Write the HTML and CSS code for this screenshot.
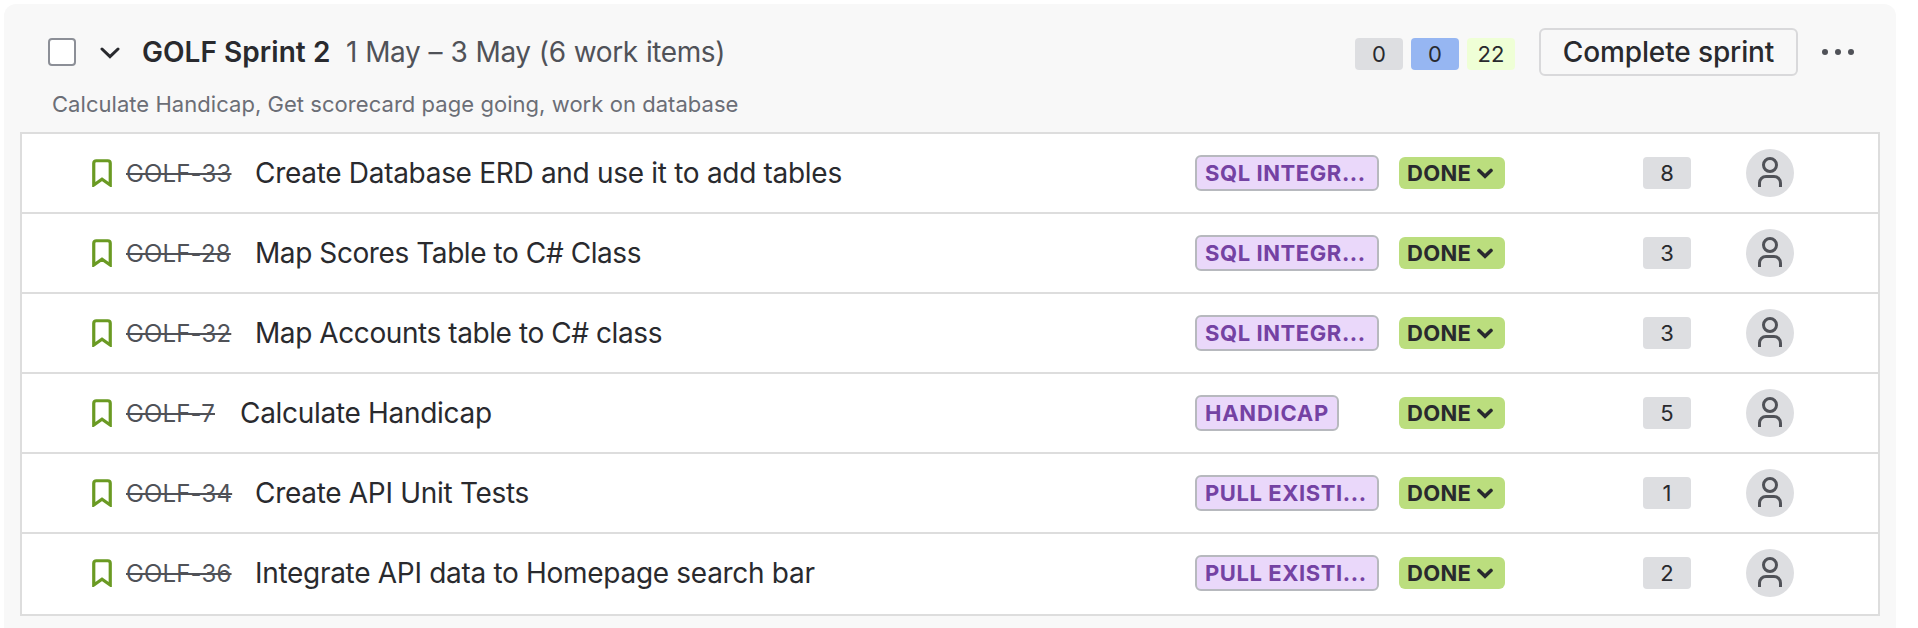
FILE: index.html
```html
<!DOCTYPE html>
<html lang="en">
<head>
<meta charset="utf-8">
<title>GOLF Sprint 2</title>
<link rel="stylesheet" href="styles.css">
</head>
<body>
<svg class="defs" width="0" height="0">
  <symbol id="story" viewBox="0 0 20 28"><path d="M1.75 26V4.25A2.5 2.5 0 0 1 4.25 1.75H15.75A2.5 2.5 0 0 1 18.25 4.25V26L10 20.2Z" fill="none" stroke="#6a9a23" stroke-width="3.2"/></symbol>
  <symbol id="chevron" viewBox="0 0 16 11"><path d="M2 2.5L8 8.3L14 2.5" fill="none" stroke="#292a2e" stroke-width="3.6" stroke-linecap="round"/></symbol>
  <symbol id="person" viewBox="0 0 48 48"><circle cx="24" cy="16" r="6.5" fill="none" stroke="#505258" stroke-width="3"/><path d="M13.5 38V34A6.5 6.5 0 0 1 20 27.5H28A6.5 6.5 0 0 1 34.5 34V38" fill="none" stroke="#505258" stroke-width="3"/></symbol>
</svg>
<main class="sprint">
  <header class="head">
    <span class="checkbox"></span>
    <svg class="toggle" viewBox="0 0 20 12"><path d="M2 2L10 9.7L18 2" fill="none" stroke="#292a2e" stroke-width="3" stroke-linecap="round"/></svg>
    <h1 class="name">GOLF Sprint 2</h1>
    <span class="dates">1 May – 3 May (6 work items)</span>
    <div class="totals"><span class="count">0</span><span class="count progress">0</span><span class="count complete">22</span></div>
    <button class="button">Complete sprint</button>
    <svg class="more" viewBox="0 0 32 8"><g fill="#505258"><circle cx="3" cy="4" r="3"/><circle cx="16" cy="4" r="3"/><circle cx="29" cy="4" r="3"/></g></svg>
  </header>
  <p class="goal">Calculate Handicap, Get scorecard page going, work on database</p>
  <section class="list">
    <article class="row"><svg class="type"><use href="#story"/></svg><span class="key">GOLF-33</span><span class="title">Create Database ERD and use it to add tables</span><div class="epic-cell"><span class="epic">SQL INTEGR...</span></div><span class="status">DONE<svg class="caret"><use href="#chevron"/></svg></span><span class="count points">8</span><svg class="avatar"><use href="#person"/></svg></article>
    <article class="row"><svg class="type"><use href="#story"/></svg><span class="key">GOLF-28</span><span class="title tight">Map Scores Table to C# Class</span><div class="epic-cell"><span class="epic">SQL INTEGR...</span></div><span class="status">DONE<svg class="caret"><use href="#chevron"/></svg></span><span class="count points">3</span><svg class="avatar"><use href="#person"/></svg></article>
    <article class="row"><svg class="type"><use href="#story"/></svg><span class="key">GOLF-32</span><span class="title tight">Map Accounts table to C# class</span><div class="epic-cell"><span class="epic">SQL INTEGR...</span></div><span class="status">DONE<svg class="caret"><use href="#chevron"/></svg></span><span class="count points">3</span><svg class="avatar"><use href="#person"/></svg></article>
    <article class="row"><svg class="type"><use href="#story"/></svg><span class="key short">GOLF-7</span><span class="title">Calculate Handicap</span><div class="epic-cell"><span class="epic handicap">HANDICAP</span></div><span class="status">DONE<svg class="caret"><use href="#chevron"/></svg></span><span class="count points">5</span><svg class="avatar"><use href="#person"/></svg></article>
    <article class="row"><svg class="type"><use href="#story"/></svg><span class="key">GOLF-34</span><span class="title">Create API Unit Tests</span><div class="epic-cell"><span class="epic">PULL EXISTI...</span></div><span class="status">DONE<svg class="caret"><use href="#chevron"/></svg></span><span class="count points">1</span><svg class="avatar"><use href="#person"/></svg></article>
    <article class="row"><svg class="type"><use href="#story"/></svg><span class="key">GOLF-36</span><span class="title">Integrate API data to Homepage search bar</span><div class="epic-cell"><span class="epic">PULL EXISTI...</span></div><span class="status">DONE<svg class="caret"><use href="#chevron"/></svg></span><span class="count points">2</span><svg class="avatar"><use href="#person"/></svg></article>
  </section>
</main>
</body>
</html>
```
FILE: styles.css
```css
* { box-sizing: border-box; }
body { margin: 0; height: 628px; overflow: hidden; background: #fff; color: #292a2e; font-family: Inter, "Liberation Sans", sans-serif; }
.defs { display: block; height: 0; }
.sprint { margin: 4px 22px 0 4px; height: 624px; padding: 24px 16px 0; background: #f8f8f8; border-radius: 12px 12px 0 0; }
.head { display: flex; align-items: center; height: 48px; padding-left: 28px; white-space: nowrap; }
.checkbox { width: 28px; height: 28px; border: 2px solid #8c8f97; border-radius: 4px; background: #fff; }
.toggle { width: 20px; height: 12px; margin: 2px 0 0 24px; }
.name { margin: 0 0 0 22px; width: 189px; font-size: 28px; font-weight: 600; line-height: 36px; letter-spacing: .05px; }
.dates { margin-left: 15px; font-size: 28px; line-height: 36px; color: #505258; letter-spacing: -.42px; word-spacing: .8px; }
.totals { display: flex; gap: 8px; margin: 4px 24px 0 auto; }
.count { width: 48px; height: 32px; border-radius: 4px; background: #dddee1; font-size: 22px; line-height: 32px; text-align: center; }
.progress { background: #96b6f2; }
.complete { background: #efffd6; }
.button { width: 259px; height: 48px; padding: 0; border: 2px solid #d9d9db; border-radius: 6px; background: transparent; color: #292a2e; font: 500 28px/44px Inter, sans-serif; letter-spacing: -.12px; }
.more { width: 32px; height: 8px; margin: 0 26px 0 24px; }
.goal { margin: 10px 0 0 32px; height: 46px; font-size: 22px; line-height: 36px; letter-spacing: .045px; color: #6b6e76; white-space: nowrap; }
.list { height: 484px; border: 2px solid #dddddd; background: #fff; }
.row { display: flex; align-items: center; height: 80px; padding: 0 84px 0 70px; border-bottom: 2px solid #dddddd; white-space: nowrap; }
.row:last-child { height: 78px; border: 0; }
.type { width: 20px; height: 28px; }
.key { margin-left: 14px; width: 105px; font-size: 24px; line-height: 32px; padding-top: 2px; color: #505258; letter-spacing: .15px; text-decoration: line-through; text-decoration-thickness: 2px; }
.short { width: 90px; }
.title { margin-left: 24px; flex: 1; font-size: 28px; line-height: 36px; letter-spacing: -.3px; }
.tight { letter-spacing: -.42px; }
.epic-cell { width: 184px; margin-right: 20px; display: flex; }
.epic { width: 184px; height: 36px; padding-left: 8px; border: 2px solid #b7b9be; border-radius: 6px; background: #ead8fa; color: #7442a3; font-size: 22px; font-weight: 700; line-height: 32px; letter-spacing: .58px; }
.handicap { width: 144px; letter-spacing: .75px; }
.status { display: flex; align-items: center; width: 106px; height: 32px; padding-left: 8px; border-radius: 6px; background: #bbde7e; font-size: 22px; font-weight: 700; line-height: 32px; letter-spacing: .3px; }
.caret { width: 16px; height: 11px; margin-left: 6px; }
.points { margin-left: 138px; }
.avatar { width: 48px; height: 48px; margin-left: 55px; border-radius: 50%; background: #dddee1; }
```
